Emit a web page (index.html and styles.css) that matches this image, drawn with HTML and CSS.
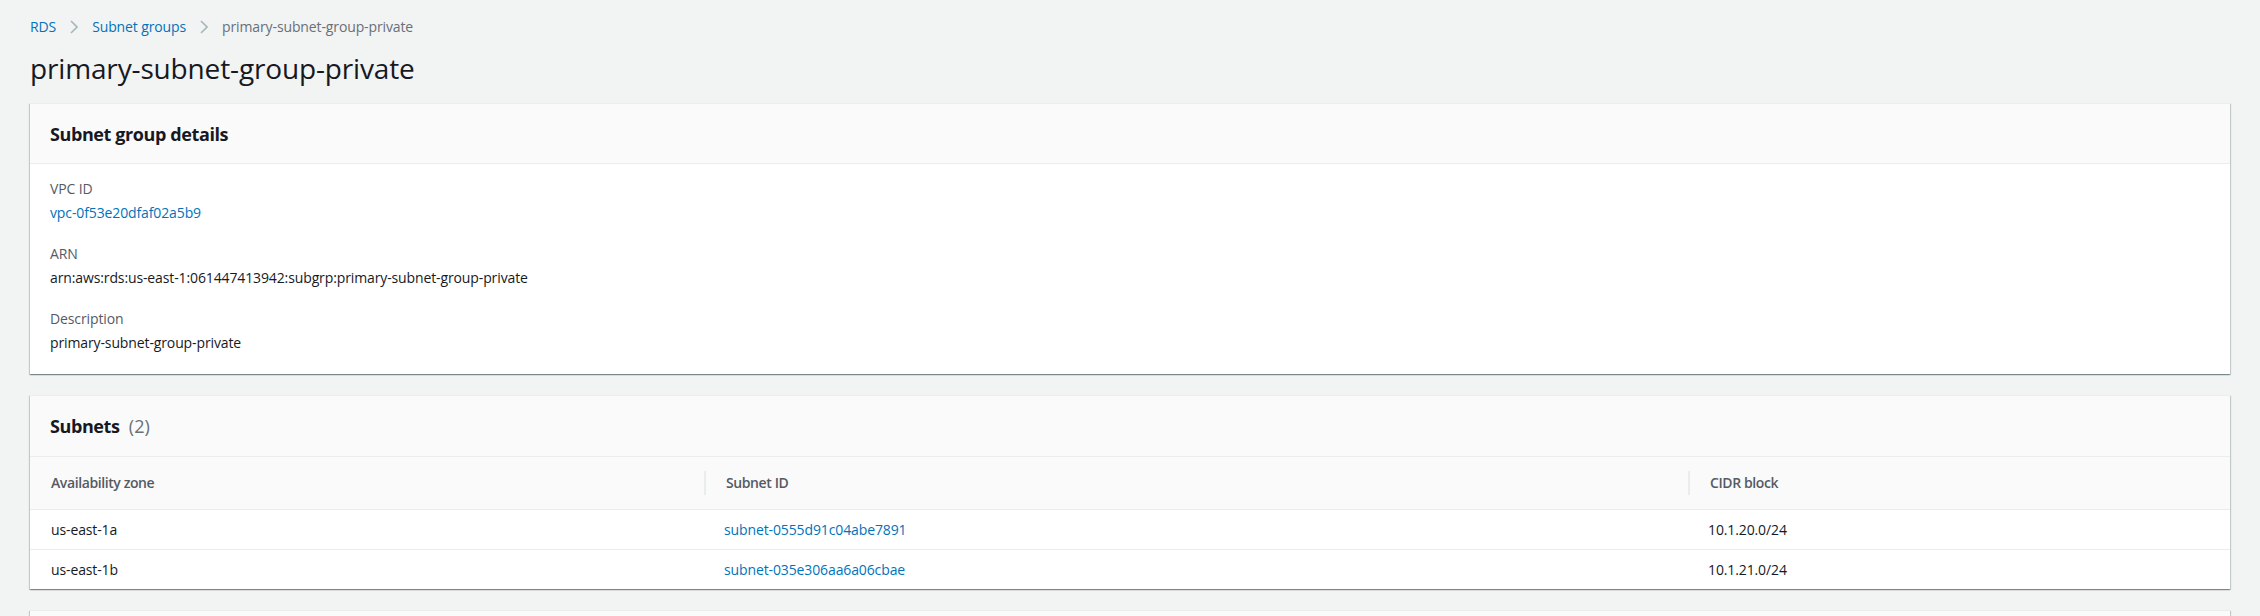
FILE: index.html
```html
<!DOCTYPE html>
<html lang="en">
<head>
<meta charset="utf-8">
<title>primary-subnet-group-private</title>
<link rel="stylesheet" href="styles.css">
</head>
<body>
<div class="page">
  <nav class="breadcrumbs">
    <a class="crumb-link" href="#">RDS</a>
    <svg class="chev" width="8" height="14" viewBox="0 0 8 14"><polyline points="1,1 7,7 1,13" fill="none" stroke="#aab7b8" stroke-width="1.6"/></svg>
    <a class="crumb-link" href="#">Subnet groups</a>
    <svg class="chev" width="8" height="14" viewBox="0 0 8 14"><polyline points="1,1 7,7 1,13" fill="none" stroke="#aab7b8" stroke-width="1.6"/></svg>
    <span class="crumb-current">primary-subnet-group-private</span>
  </nav>
  <h1 class="page-title">primary-subnet-group-private</h1>

  <section class="card">
    <div class="card-header">
      <h2 class="card-title">Subnet group details</h2>
    </div>
    <div class="card-body">
      <div class="kv">
        <div class="kv-label">VPC ID</div>
        <div class="kv-value"><a class="link" href="#">vpc-0f53e20dfaf02a5b9</a></div>
      </div>
      <div class="kv">
        <div class="kv-label">ARN</div>
        <div class="kv-value">arn:aws:rds:us-east-1:061447413942:subgrp:primary-subnet-group-private</div>
      </div>
      <div class="kv">
        <div class="kv-label">Description</div>
        <div class="kv-value">primary-subnet-group-private</div>
      </div>
    </div>
  </section>

  <section class="card">
    <div class="card-header card-header-tall">
      <h2 class="card-title">Subnets <span class="counter">(2)</span></h2>
    </div>
    <div class="table">
      <div class="tr thead">
        <div class="th"><span class="th-inner first">Availability zone</span></div>
        <div class="th"><span class="th-inner">Subnet ID</span></div>
        <div class="th"><span class="th-inner">CIDR block</span></div>
      </div>
      <div class="tr">
        <div class="td">us-east-1a</div>
        <div class="td"><a class="link" href="#">subnet-0555d91c04abe7891</a></div>
        <div class="td">10.1.20.0/24</div>
      </div>
      <div class="tr">
        <div class="td">us-east-1b</div>
        <div class="td"><a class="link" href="#">subnet-035e306aa6a06cbae</a></div>
        <div class="td">10.1.21.0/24</div>
      </div>
    </div>
  </section>

  <section class="card card-partial">
    <div class="card-header"></div>
  </section>
</div>
</body>
</html>
```
FILE: styles.css
```css
html, body {
  margin: 0;
  padding: 0;
}
body {
  background: #f2f3f3;
  font-family: "Open Sans", "Noto Sans", sans-serif;
  font-size: 14px;
  letter-spacing: -0.12px;
  color: #16191f;
  overflow: hidden;
  height: 616px;
}
.page {
  padding: 0 30px;
}
.breadcrumbs {
  display: flex;
  align-items: center;
  padding-top: 17px;
  height: 20px;
  line-height: 20px;
}
.crumb-link {
  color: #0073bb;
  text-decoration: none;
}
.chev {
  margin: 0 14px;
  display: block;
}
.crumb-current {
  color: #687078;
}
.page-title {
  margin: 13px 0 17px;
  font-size: 28px;
  line-height: 36px;
  font-weight: 400;
  letter-spacing: -0.15px;
  color: #16191f;
}
.card {
  background: #fff;
  border-top: 1px solid #eaeded;
  box-shadow: 0 1px 1px 0 rgba(0, 28, 36, 0.3), 1px 1px 1px 0 rgba(0, 28, 36, 0.15), -1px 1px 1px 0 rgba(0, 28, 36, 0.15);
  margin-bottom: 21px;
}
.card-header {
  background: #fafafa;
  border-bottom: 1px solid #eaeded;
  height: 59px;
  padding: 0 20px;
  display: flex;
  align-items: center;
}
.card-header-tall {
  height: 60px;
}
.card-title {
  margin: 0;
  font-size: 18px;
  line-height: 22px;
  font-weight: 700;
  letter-spacing: -0.4px;
  color: #16191f;
}
.counter {
  font-weight: 400;
  color: #687078;
  margin-left: 5px;
  letter-spacing: 0;
}
.card-body {
  padding: 15px 20px 21px;
  display: flex;
  flex-direction: column;
  gap: 21px;
}
.kv-label {
  color: #545b64;
  line-height: 20px;
}
.kv-value {
  margin-top: 4px;
  line-height: 20px;
}
.link {
  color: #0073bb;
  text-decoration: none;
}
.tr {
  display: grid;
  grid-template-columns: 674px 984px 1fr;
  border-top: 1px solid #eaeded;
}
.thead {
  border-top: none;
  background: #fafafa;
  height: 52px;
  align-items: center;
}
.th {
  color: #545b64;
  font-weight: 650;
  letter-spacing: -0.4px;
}
.th-inner {
  display: block;
  border-left: 2px solid #eaeded;
  padding-left: 20px;
  line-height: 24px;
}
.th-inner.first {
  border-left: none;
  padding-left: 21px;
}
.tr:not(.thead) {
  height: 39px;
  align-items: center;
}
.td {
  padding: 0 20px;
  line-height: 20px;
}
.tr:not(.thead) .td:first-child {
  padding-left: 21px;
}
.card-partial .card-header {
  height: 40px;
}
```
